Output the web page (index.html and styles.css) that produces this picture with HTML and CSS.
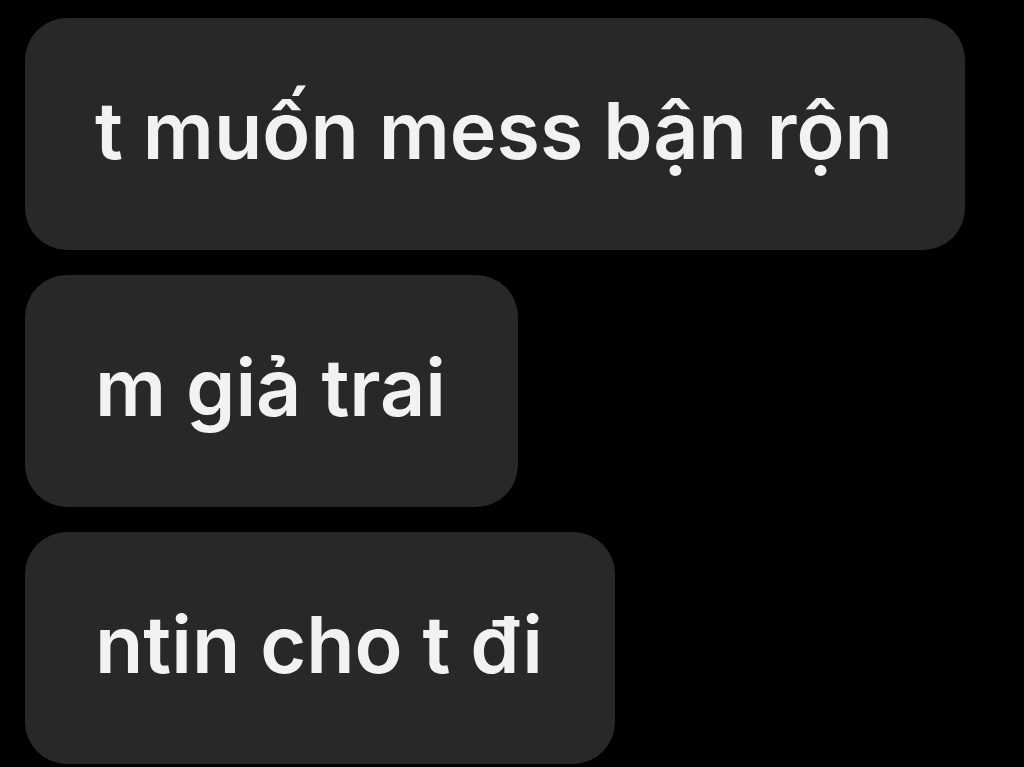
FILE: index.html
```html
<!DOCTYPE html>
<html lang="vi">
<head>
<meta charset="utf-8">
<link rel="stylesheet" href="styles.css">
</head>
<body>
<div class="thread">
  <div class="bubble"><span class="text">t muốn mess bận rộn</span></div>
  <div class="bubble"><span class="text">m giả trai</span></div>
  <div class="bubble"><span class="text">ntin cho t đi</span></div>
</div>
</body>
</html>
```
FILE: styles.css
```css
html, body {
  margin: 0;
  padding: 0;
  background: #000;
  height: 100%;
  overflow: hidden;
}
.thread {
  display: flex;
  flex-direction: column;
  align-items: flex-start;
  gap: 25px;
  padding: 18px 0 0 25px;
}
.bubble {
  display: flex;
  align-items: center;
  height: 232px;
  box-sizing: border-box;
  padding: 0 72px 7px 70px;
  background: #282828;
  border-radius: 42px;
}
.text {
  font-family: Inter, "Noto Sans", sans-serif;
  font-weight: 600;
  font-size: 79px;
  color: #f2f2f2;
  white-space: nowrap;
  line-height: 1;
}
```
